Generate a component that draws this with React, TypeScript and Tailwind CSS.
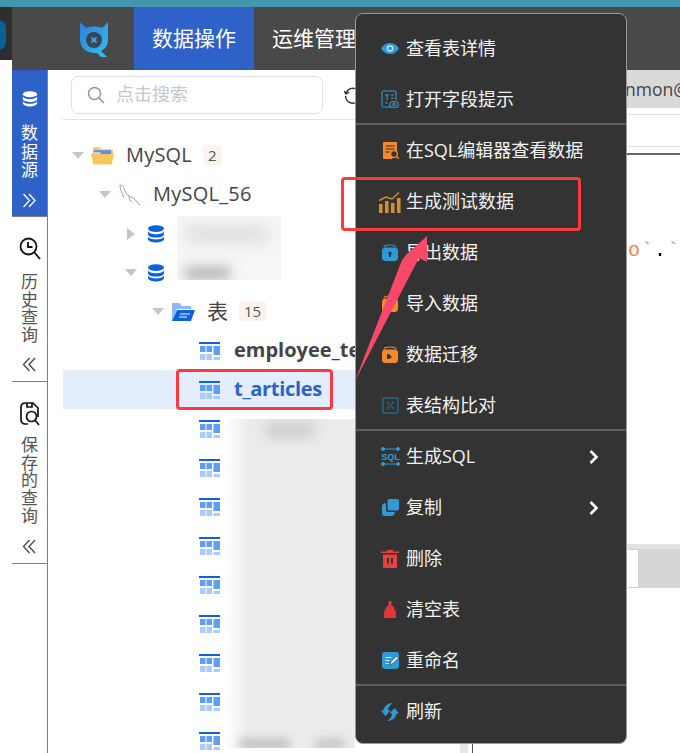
import React from 'react';

const font = { cjk: 'font-["Open_Sans","Noto_Sans_CJK_SC",sans-serif]' };

function Caret({ open = true }: { open?: boolean }) {
  return (
    <svg width="12" height="12" viewBox="0 0 12 12" className="shrink-0">
      {open ? <path d="M0 2h12L6 9z" fill="#c3c6d0" /> : <path d="M2 0l8 6-8 6z" fill="#c3c6d0" />}
    </svg>
  );
}

function DbIcon({ color = '#0d62e0', size = 18 }: { color?: string; size?: number }) {
  return (
    <svg width={size} height={size} viewBox="0 0 18 18" className="shrink-0">
      <ellipse cx="9" cy="3.6" rx="8" ry="3.4" fill={color} />
      <path d="M1 6.2c1 2.2 4.5 3 8 3s7-.8 8-3v3.2c-.8 2.2-4.5 3.1-8 3.1s-7.2-.9-8-3.1z" fill={color} />
      <path d="M1 11.5c1 2.1 4.5 2.9 8 2.9s7-.8 8-2.9v2.7c-.8 2.3-4.5 3.3-8 3.3s-7.2-1-8-3.3z" fill={color} />
    </svg>
  );
}

function TableIcon() {
  return (
    <svg width="21" height="18" viewBox="0 0 21 18" className="shrink-0">
      <rect x="0" y="0" width="21" height="2" fill="#0d62e0" />
      <rect x="1" y="4" width="5.5" height="6" fill="#5f9ef8" />
      <rect x="7.5" y="4" width="5.5" height="6" fill="#5f9ef8" />
      <rect x="14.5" y="4" width="6.5" height="9" fill="#5f9ef8" />
      <rect x="1" y="12" width="5.5" height="6" fill="#a9ccfc" />
      <rect x="7.5" y="12" width="5.5" height="6" fill="#a9ccfc" />
      <rect x="14.5" y="15" width="6.5" height="3" fill="#a9ccfc" />
    </svg>
  );
}

function TreeRow({ indent, children, active }: { indent: number; children: React.ReactNode; active?: boolean }) {
  return (
    <div className={`flex h-[39px] items-center ${active ? 'bg-[#e3edfb]' : ''}`} style={{ paddingLeft: indent }}>
      {children}
    </div>
  );
}

function Count({ n }: { n: number }) {
  return <span className="ml-[11px] -mt-[2px] rounded-[3px] bg-[#faf3ee] px-[5px] text-[15px] leading-[20px] text-[#555]">{n}</span>;
}

function SideText({ text, color, tall }: { text: string; color: string; tall?: boolean }) {
  return <div className={`w-[18px] text-center text-[17px] ${tall ? 'leading-[18.5px]' : 'leading-[17.7px]'} ${color}`}>{text}</div>;
}

function Chevrons({ dir, color }: { dir: 'left' | 'right'; color: string }) {
  const d = dir === 'right' ? 'M1.5 1l6 6.5-6 6.5M7 1l6 6.5-6 6.5' : 'M13 1L7 7.5l6 6.5M7.5 1l-6 6.5 6 6.5';
  return (
    <svg width="15" height="15" viewBox="0 0 15 15" fill="none" stroke={color} strokeWidth="1.3">
      <path d={d} />
    </svg>
  );
}

const blue = '#2f9bd6';
const orange = '#f8882a';

function Box({ color, arrow }: { color: string; arrow: string }) {
  return (
    <svg width="18" height="18" viewBox="0 0 18 18">
      <path d="M3 3.5C3 1.5 5 1 9 1s6 .5 6 2.5" fill="none" stroke={color} strokeWidth="1.2" />
      <rect x="1" y="3.5" width="16" height="13.5" rx="3.5" fill={color} />
      <path d={arrow} fill="#2d3a44" />
    </svg>
  );
}

const icons: Record<string, React.ReactNode> = {
  eye: (
    <svg width="18" height="11" viewBox="0 0 18 11">
      <path d="M0 5.5C2.5 1.5 5.5 0 9 0s6.5 1.5 9 5.5C15.5 9.5 12.5 11 9 11S2.5 9.5 0 5.5z" fill={blue} />
      <circle cx="9" cy="5.5" r="3.3" fill="#d6eefa" />
      <circle cx="9" cy="5.5" r="2" fill={blue} />
    </svg>
  ),
  field: (
    <svg width="18" height="19" viewBox="0 0 18 19" fill="none" stroke={blue} strokeWidth="1.1">
      <path d="M10 17H2.5A1.5 1.5 0 011 15.500v-13A1.5 1.5 0 012.5 1h11A1.5 1.5 0 0115 2.500V10" />
      <path d="M4 5h4M6 5v5M10 5h3M10 8h3M4 13h3" />
      <ellipse cx="13" cy="14.5" rx="4.3" ry="3" fill="#333" />
      <circle cx="13" cy="14.5" r="1.2" />
    </svg>
  ),
  doc: (
    <svg width="17" height="17" viewBox="0 0 17 17">
      <path d="M2 0h12a1 1 0 011 1v9l-5 7H2a1 1 0 01-1-1V1a1 1 0 011-1z" fill={orange} />
      <path d="M3.5 4h9M3.5 7h9M3.5 10h4" stroke="#333" strokeWidth="1.2" />
      <circle cx="12" cy="12" r="3.3" fill="#333" stroke={orange} strokeWidth="1.3" />
      <path d="M14.5 14.5L17 17" stroke={orange} strokeWidth="1.3" />
    </svg>
  ),
  chart: (
    <svg width="22" height="22" viewBox="0 0 22 22" fill="#d4912a">
      <rect x="0" y="13" width="3.5" height="9" />
      <rect x="6" y="10" width="3.5" height="12" />
      <rect x="12" y="12" width="3.5" height="10" />
      <rect x="18" y="7" width="3.5" height="15" />
      <path d="M0 9.5L7 6l6 2 7-6.500" fill="none" stroke="#d4912a" strokeWidth="1.5" />
    </svg>
  ),
  exportBox: <Box color={blue} arrow="M9 7l2.5 3H10v3H8v-3H6.5z" />,
  importBox: <Box color={orange} arrow="M9 14l-2.5-3H8V8h2v3h1.5z" />,
  moveBox: <Box color={orange} arrow="M6 8h2l3 3-3 2H6z" />,
  compare: (
    <svg width="17" height="17" viewBox="0 0 17 17" fill="none" stroke="#28698a" strokeWidth="1.4">
      <rect x="1" y="1" width="15" height="15" rx="1.5" />
      <path d="M5 5l3 3M12 5L9 8M5 12l3-3M12 12L9 9" />
    </svg>
  ),
  sql: (
    <svg width="19" height="19" viewBox="0 0 19 19" fill="none" stroke={blue} strokeWidth="1">
      <path d="M2 2h15M2 17h15" />
      <circle cx="2" cy="2" r="1.5" fill={blue} />
      <circle cx="17" cy="2" r="1.5" fill={blue} />
      <circle cx="2" cy="17" r="1.5" fill={blue} />
      <circle cx="17" cy="17" r="1.5" fill={blue} />
      <text x="9.5" y="13" textAnchor="middle" fontSize="9" fontWeight="700" fontFamily="Liberation Sans" fill={blue} stroke="none">SQL</text>
    </svg>
  ),
  copy: (
    <svg width="17" height="17" viewBox="0 0 17 17" fill={blue}>
      <rect x="5.5" y="0" width="11.5" height="11.5" rx="2" />
      <path d="M4 4.5V11a2 2 0 002 2h6.5A3 3 0 0110 17H3a3 3 0 01-3-3V7.500a3 3 0 014-3z" />
    </svg>
  ),
  trash: (
    <svg width="18" height="18" viewBox="0 0 18 18" fill="#e8403f">
      <path d="M6 0h6v1.5h6V3H0V1.5h6z" />
      <path d="M2 4.5h14V17a1 1 0 01-1 1H3a1 1 0 01-1-1z" />
      <rect x="6" y="8" width="2" height="5.5" fill="#333" />
      <rect x="10" y="8" width="2" height="5.5" fill="#333" />
    </svg>
  ),
  broom: (
    <svg width="14" height="17" viewBox="0 0 14 17" fill="#e0393b">
      <rect x="5.5" y="0" width="3" height="5" />
      <path d="M4 5h6l3 6v6H1v-6z" />
    </svg>
  ),
  rename: (
    <svg width="17" height="17" viewBox="0 0 17 17">
      <path d="M3 0h11a3 3 0 013 3v11a3 3 0 01-3 3H3a3 3 0 01-3-3V3a3 3 0 013-3z" fill={blue} />
      <path d="M3.5 5.5h6M3.5 8.5h4M3.5 11.5h3" stroke="#d6eefa" strokeWidth="1.1" />
      <path d="M8 13l1-3.5L14.5 4l2 2-5.5 5.5z" fill="#d6eefa" stroke="#333" strokeWidth=".6" />
    </svg>
  ),
  refresh: (
    <svg width="18" height="18" viewBox="0 0 18 18" fill={blue}>
      <path d="M12 0C8 2.5 7 5 7 7.5h2.5L4.5 13 0 7.5h2.5C2.8 3.5 7 0 12 0z" />
      <path d="M6 18c4-2.5 5-5 5-7.5H8.5L13.5 5 18 10.5h-2.5C15.2 14.5 11 18 6 18z" />
    </svg>
  ),
};

type Item = { icon: string; label: string; arrow?: boolean };

const groups: Item[][] = [
  [
    { icon: 'eye', label: '查看表详情' },
    { icon: 'field', label: '打开字段提示' },
  ],
  [
    { icon: 'doc', label: '在SQL编辑器查看数据' },
    { icon: 'chart', label: '生成测试数据' },
    { icon: 'exportBox', label: '导出数据' },
    { icon: 'importBox', label: '导入数据' },
    { icon: 'moveBox', label: '数据迁移' },
    { icon: 'compare', label: '表结构比对' },
  ],
  [
    { icon: 'sql', label: '生成SQL', arrow: true },
    { icon: 'copy', label: '复制', arrow: true },
    { icon: 'trash', label: '删除' },
    { icon: 'broom', label: '清空表' },
    { icon: 'rename', label: '重命名' },
  ],
  [{ icon: 'refresh', label: '刷新' }],
];

function MenuRow({ item }: { item: Item }) {
  return (
    <div className="flex h-[51px] items-center pl-[22px] pr-[27px] text-[18px] text-[#f2f2f2]">
      <div className="flex w-[24px] shrink-0 justify-center">{icons[item.icon]}</div>
      <span className="ml-[4px] flex-1">{item.label}</span>
      {item.arrow && (
        <svg width="10" height="14" viewBox="0 0 10 14" fill="none" stroke="#fff" strokeWidth="2.6">
          <path d="M1.5 1l6 6-6 6" />
        </svg>
      )}
    </div>
  );
}

const tableRows = Array.from({ length: 9 });

export default function App() {
  return (
    <div className={`relative flex h-[753px] w-[680px] flex-col overflow-hidden bg-white ${font.cjk}`}>
      <div className="h-[7px] shrink-0 bg-[#4497ab]" />
      <div className="flex min-h-0 flex-1">
        <div className="w-[12px] shrink-0">
          <div className="h-[53px] overflow-hidden bg-[#2e2e2e] pt-[13px]">
            <div className="-ml-[10px] h-[30px] w-[16px] rounded-full bg-[#0a5f94]" />
          </div>
        </div>
        <div className="flex min-w-0 flex-1 flex-col">
          <header className="flex h-[63px] shrink-0 items-center bg-[#494949] text-[21px] text-white">
            <svg width="30" height="36" viewBox="0 0 30 36" className="ml-[67px] mr-[25px]">
              <defs>
                <linearGradient id="logo" x1="0" y1="0" x2="1" y2="1">
                  <stop offset="0" stopColor="#2a7de0" />
                  <stop offset="1" stopColor="#33c3ea" />
                </linearGradient>
              </defs>
              <path d="M1 1l6 6c5-2 11-2 16 0l6-6v18c0 5-3 9-7 11l6 6h-6l-4-4C8 33 1 27 1 18z" fill="url(#logo)" />
              <circle cx="15" cy="19" r="8" fill="#3b4450" />
              <path d="M12.5 16.5l5 5M17.5 16.5l-5 5" stroke="#3aa7e6" strokeWidth="1.8" />
            </svg>
            <div className="flex h-full w-[120px] items-center justify-center bg-[#2f62c9]">数据操作</div>
            <div className="ml-[18px] whitespace-nowrap">运维管理</div>
          </header>
          <div className="flex min-h-0 flex-1">
            <aside className="flex w-[36px] shrink-0 flex-col items-center border-r border-[#808080]">
              <div className="flex h-[146px] w-full flex-col items-center bg-[#2f62c9] pt-[21px]">
                <DbIcon color="#ffffff" size={16} />
                <div className="mt-[17px]"><SideText text="数据源" color="text-white" tall /></div>
                <div className="mt-[13px]"><Chevrons dir="right" color="#ffffff" /></div>
              </div>
              <div className="flex h-[165px] w-full flex-col items-center border-t border-[#808080] pt-[20px]">
                <svg width="22" height="24" viewBox="0 0 22 24" fill="none" stroke="#111" strokeWidth="1.8" className="shrink-0">
                  <circle cx="9.5" cy="9.5" r="8" />
                  <path d="M9 5v5h4.5M15 15l6 7" />
                </svg>
                <div className="mt-[12px]"><SideText text="历史查询" color="text-[#555]" /></div>
                <div className="mt-[13px]"><Chevrons dir="left" color="#444444" /></div>
              </div>
              <div className="flex h-[183px] w-full flex-col items-center border-y border-[#808080] pt-[20px]">
                <svg width="20" height="24" viewBox="0 0 20 24" fill="none" stroke="#111" strokeWidth="1.7" className="shrink-0">
                  <path d="M8 22H5a4 4 0 01-4-4V5a4 4 0 014-4h8l5 5v9" />
                  <path d="M7 1v4h5V1" />
                  <circle cx="11.5" cy="14.5" r="5" />
                  <path d="M15 18l4 5" />
                </svg>
                <div className="mt-[10px]"><SideText text="保存的查询" color="text-[#555]" /></div>
                <div className="mt-[14px]"><Chevrons dir="left" color="#444444" /></div>
              </div>
            </aside>
            <section className="flex w-[425px] shrink-0 flex-col border-r border-[#555] pl-[15px]">
              <div className="flex h-[50px] shrink-0 items-start border-b border-[#e4e4e4] pl-[8px] pt-[6px]">
                <div className="flex h-[38px] w-[252px] items-center rounded-[7px] border border-[#dcdfe6] pl-[15px] text-[18px] text-[#c4c7cf]">
                  <svg width="18" height="18" viewBox="0 0 18 18" fill="none" stroke="#909399" strokeWidth="1.5">
                    <circle cx="7.5" cy="7.5" r="6" />
                    <path d="M12 12l5 5" />
                  </svg>
                  <span className="ml-[11px] -mt-[2px]">点击搜索</span>
                </div>
                <svg width="18" height="18" viewBox="0 0 18 18" fill="none" stroke="#333" strokeWidth="1.4" className="ml-[21px] mt-[10px]">
                  <path d="M2 7a7.5 7.5 0 11-.5 3" />
                  <path d="M0 5l2 3 3-2" />
                </svg>
              </div>
              <div className="min-h-0 flex-1 overflow-hidden pt-[16px] text-[20px] text-[#444]">
                <TreeRow indent={9}>
                  <Caret />
                  <svg width="23" height="19" viewBox="0 0 24 19" className="ml-[7px] shrink-0">
                    <path d="M2 3a2 2 0 012-2h5l2 2h10a2 2 0 012 2v8H2z" fill="#f6c85c" />
                    <rect x="3" y="4" width="18" height="7" fill="#5b8fe8" />
                    <rect x="3" y="6" width="7" height="3" fill="#c4d8fa" />
                    <path d="M0 8h24l-2 9a2 2 0 01-2 2H4a2 2 0 01-2-2z" fill="#f6c85c" />
                  </svg>
                  <span className="ml-[12px] -mt-[2px] tracking-[.2px]">MySQL</span>
                  <Count n={2} />
                </TreeRow>
                <TreeRow indent={36}>
                  <Caret />
                  <svg width="22" height="22" viewBox="0 0 22 22" fill="none" stroke="#7d9db8" strokeWidth=".9" className="ml-[8px] shrink-0">
                    <path d="M1 1c2 0 3 1 4 3 1 3 2 6 5 8 3 1 6 3 8 6l3 3M1 1c0 3 1 6 2 8s1 3 2 5M10 12c0 2 1 5 3 6" />
                  </svg>
                  <span className="ml-[12px] -mt-[2px] tracking-[.25px]">MySQL_56</span>
                </TreeRow>
                <TreeRow indent={62}>
                  <Caret open={false} />
                  <div className="ml-[10px]"><DbIcon /></div>
                </TreeRow>
                <TreeRow indent={62}>
                  <Caret />
                  <div className="ml-[10px]"><DbIcon /></div>
                </TreeRow>
                <TreeRow indent={89}>
                  <Caret />
                  <svg width="24" height="20" viewBox="0 0 24 20" className="ml-[7px] shrink-0">
                    <path d="M1 1h7l3 3h9v3H6L1 19z" fill="#8db8f6" />
                    <path d="M6 8h18l-4 11H1z" fill="#0d62e0" />
                    <path d="M9 12h10M8 15h8" stroke="#fff" strokeWidth="1.2" />
                  </svg>
                  <span className="ml-[12px] text-[21px]">表</span>
                  <Count n={15} />
                </TreeRow>
                <TreeRow indent={136}>
                  <TableIcon />
                  <span className="ml-[14px] -mt-[2px] font-bold whitespace-nowrap">employee_test</span>
                </TreeRow>
                <TreeRow indent={136} active>
                  <TableIcon />
                  <span className="ml-[14px] -mt-[2px] font-bold tracking-[-.3px] text-[#2f62c9]">t_articles</span>
                </TreeRow>
                {tableRows.map((_, i) => (
                  <TreeRow key={i} indent={136}>
                    <TableIcon />
                  </TreeRow>
                ))}
              </div>
              <div className="absolute bottom-0 left-[460px] h-[9px] w-[8px] bg-[#e6e6e6]" />
            </section>
            <section className="flex min-w-0 flex-1 flex-col">
              <div className="h-[38px] shrink-0 whitespace-nowrap bg-[#d9d9d9] pl-[152px] text-[17.5px] leading-[38px] text-[#444]">nmon@</div>
              <div className="mt-[6px] h-[33px] shrink-0 border-y border-[#dedeee]" />
              <div className="mt-[6px] h-[2px] shrink-0 bg-[#666]" />
              <div className='h-[90px] shrink-0 whitespace-nowrap pl-[142px] pt-[86px] font-["Liberation_Mono",monospace] text-[20px] leading-[20px] tracking-[1px] text-[#ff7a45]'>
                mo`<span className="text-black">.</span>`
              </div>
              <div className="mt-[299px] flex h-[44px] shrink-0 flex-col">
                <div className="h-[5px] bg-[#e2e2e2]" />
                <div className="flex flex-1">
                  <div className="ml-[154px] w-[12px] border-y border-r border-[#d0d0d0]" />
                  <div className="flex-1 bg-[#d6d6d6]" />
                </div>
              </div>
            </section>
          </div>
        </div>
      </div>

      {/* masked names */}
      <div className="absolute left-[177px] top-[216px] h-[64px] w-[104px] overflow-hidden bg-[#f6f6f6]">
        <div className="absolute left-[10px] top-[10px] h-[16px] w-[80px] bg-[#dcdcdc] blur-[8px]" />
        <div className="absolute left-[8px] top-[50px] h-[14px] w-[45px] bg-[#b9b9b9] blur-[6px]" />
      </div>
      <div className="absolute left-[225px] top-[419px] h-[329px] w-[130px] overflow-hidden bg-[linear-gradient(to_right,#ffffff,#ececec_18%,#ececec)]">
        <div className="absolute left-[40px] top-[5px] h-[12px] w-[50px] bg-[#c4c4c4] blur-[7px]" />
        <div className="absolute left-[15px] top-[320px] h-[10px] w-[50px] bg-[#bdbdbd] blur-[5px]" />
        <div className="absolute left-[90px] top-[320px] h-[10px] w-[30px] bg-[#c4c4c4] blur-[5px]" />
      </div>

      {/* context menu */}
      <div className="absolute left-[355px] top-[13px] w-[272px] overflow-hidden rounded-[8px] border-[1.5px] border-[#9a9a9a] bg-[#333333] pt-[9px] pb-[6px]">
        {groups.map((group, i) => (
          <div key={i}>
            {i > 0 && <div className="relative z-10 -mt-[2px] h-[2px] bg-[#5e5e5e]" />}
            {group.map((item) => (
              <MenuRow key={item.label} item={item} />
            ))}
          </div>
        ))}
      </div>

      {/* annotations */}
      <div className="absolute left-[176px] top-[369px] h-[41px] w-[157px] rounded-[4px] border-[3px] border-[#f93b3f]" />
      <div className="absolute left-[341px] top-[177px] h-[54px] w-[240px] rounded-[4px] border-[3px] border-[#f93b3f]" />
      <svg width="90" height="160" viewBox="0 0 90 160" className="absolute left-[345px] top-[230px]">
        <path d="M10 151L57 30 61 25 82 6 82 32 74 28z" fill="#f9496a" />
      </svg>
    </div>
  );
}
